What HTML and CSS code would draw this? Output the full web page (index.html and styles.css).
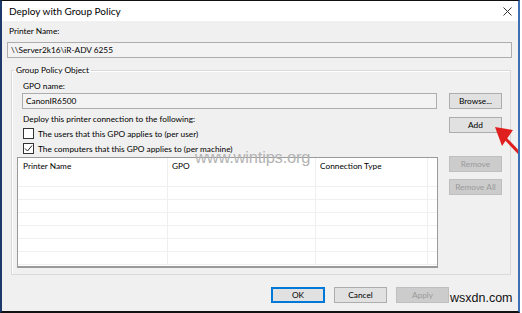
FILE: index.html
```html
<!DOCTYPE html>
<html lang="en">
<head>
  <meta charset="UTF-8" />
  <title>Deploy with Group Policy</title>
  <link rel="stylesheet" href="styles.css">
</head>
<body>

  <div class="window">
    <div class="titlebar">
      <span class="title">Deploy with Group Policy</span>
      <svg class="close" width="9" height="9" viewBox="0 0 9 9">
        <path d="M0.5 0.5 L8.5 8.5 M8.5 0.5 L0.5 8.5" stroke="#333" stroke-width="1" fill="none"/>
      </svg>
    </div>

    <div class="dialog">
      <div class="label">Printer Name:</div>
      <div class="textbox readonly">\\Server2k16\iR-ADV 6255</div>

      <fieldset class="group">
        <legend>Group Policy Object</legend>
        <div class="label indent">GPO name:</div>
        <div class="row">
          <div class="textbox gpo">CanonIR6500</div>
          <button class="btn">Browse...</button>
        </div>

        <div class="row">
          <div class="deploy">
            <div class="label">Deploy this printer connection to the following:</div>
            <div class="check"><span class="box"></span>The users that this GPO applies to (per user)</div>
            <div class="check">
              <span class="box">
                <svg width="9" height="9" viewBox="0 0 9 9"><path d="M1 4.5 L3.5 7 L8 1.5" stroke="#222" stroke-width="1" fill="none"/></svg>
              </span>The computers that this GPO applies to (per machine)
            </div>
          </div>
          <button class="btn add">Add</button>
        </div>

        <div class="row">
          <div class="list">
            <div class="list-row head">
              <span>Printer Name</span><span>GPO</span><span>Connection Type</span><span></span>
            </div>
            <div class="list-row"><span></span><span></span><span></span><span></span></div>
            <div class="list-row"><span></span><span></span><span></span><span></span></div>
            <div class="list-row"><span></span><span></span><span></span><span></span></div>
            <div class="list-row"><span></span><span></span><span></span><span></span></div>
            <div class="list-row"><span></span><span></span><span></span><span></span></div>
            <div class="list-row"><span></span><span></span><span></span><span></span></div>
            <div class="list-row"><span></span><span></span><span></span><span></span></div>
          </div>
          <div class="side">
            <button class="btn" disabled>Remove</button>
            <button class="btn" disabled>Remove All</button>
          </div>
        </div>
      </fieldset>

      <div class="footer">
        <button class="btn default">OK</button>
        <button class="btn">Cancel</button>
        <button class="btn" disabled>Apply</button>
      </div>
    </div>

    <!-- overlays on the screenshot -->
    <div class="watermark">www.wintips.org</div>
    <div class="site">wsxdn.com</div>
    <svg class="arrow" width="44" height="50" viewBox="0 0 44 50">
      <path d="M24 22 L44 43" stroke="#e0201e" stroke-width="3" fill="none"/>
      <polygon points="15,12 33,15 22,31" fill="#e0201e"/>
    </svg>
  </div>

</body>
</html>
```

FILE: styles.css
```css
html, body {
  margin: 0;
  padding: 0;
  background: #ffffff;
  font-family: 'Lato', 'Noto Sans', sans-serif;
  font-size: 8.3px;
  color: #000;
}

.window {
  position: relative;
  width: 520px;
  height: 313px;
  box-sizing: border-box;
  border-top: 1px solid #111;
  border-left: 2px solid #1b3a6b;
  border-right: 2px solid #3d6fb4;
  border-bottom: 2px solid #111;
  background: #f0f0f0;
  display: flex;
  flex-direction: column;
  overflow: hidden;
}

.titlebar {
  height: 20px;
  background: #fff;
  display: flex;
  align-items: center;
  justify-content: space-between;
  padding: 0 6px 0 7px;
}

.title {
  font-size: 10px;
}

.close {
  margin-top: 1px;
}

.dialog {
  flex: 1;
  padding: 4px 6px 0 5px;
}

.label {
  line-height: 12px;
  height: 12px;
  padding-left: 2px;
}

.indent {
  padding-left: 6px;
}

.textbox {
  height: 16px;
  box-sizing: border-box;
  border: 1px solid #adadad;
  line-height: 14px;
  padding-left: 3px;
  background: #f3f3f3;
}

.readonly {
  margin-top: 5px;
}

.group {
  margin: 6px 1px 0 4px;
  padding: 4px 8px 6px 5px;
  border: 1px solid #d9d9d9;
  box-shadow: inset 1px 1px 0 #fff;
}

.group legend {
  padding: 0 2px;
  margin-left: -3px;
  line-height: 12px;
}

.row {
  display: flex;
  align-items: flex-start;
}

.gpo {
  flex: 1;
  margin: 1px 12px 0 5px;
}

.btn {
  width: 53px;
  height: 16px;
  box-sizing: border-box;
  border: 1px solid #adadad;
  background: #e1e1e1;
  font-family: inherit;
  font-size: 8.3px;
  padding: 0;
  color: #000;
}

.btn[disabled] {
  background: #cccccc;
  border-color: #bfbfbf;
  color: #9a9a9a;
}

.row .btn {
  margin-top: 1px;
}

.deploy {
  flex: 1;
  margin-top: 3px;
  padding-left: 4px;
}

.deploy .label {
  height: 14px;
  line-height: 14px;
}

.add {
  margin-top: 8px !important;
}

.check {
  display: flex;
  align-items: center;
  height: 15px;
  padding-left: 2px;
}

.check:first-of-type {
  margin-top: 3px;
}

.box {
  width: 11px;
  height: 11px;
  box-sizing: border-box;
  border: 1px solid #333;
  background: #fff;
  margin-right: 4px;
  display: flex;
  align-items: center;
  justify-content: center;
}

.list {
  width: 421px;
  height: 111px;
  box-sizing: border-box;
  margin: 1px 11px 0 0;
  border: 1px solid #9a9a9a;
  border-bottom-width: 2px;
  background: #fff;
  overflow: hidden;
}

.list-row {
  display: grid;
  grid-template-columns: 150px 148px 112px 1fr;
  height: 13px;
  box-sizing: border-box;
  border-bottom: 1px solid #f0f0f0;
}

.list-row span {
  border-right: 1px solid #efefef;
  padding-left: 4px;
}

.list-row span:last-child {
  border-right: none;
}

.list-row.head {
  height: 16px;
  border-bottom: none;
  line-height: 16px;
}

.list-row.head span:first-child {
  padding-left: 5px;
}

.side {
  display: flex;
  flex-direction: column;
  gap: 7px;
}

.side .btn {
  margin-top: 0;
}

.footer {
  display: flex;
  justify-content: flex-end;
  gap: 9px;
  margin-top: 12px;
  padding-right: 63px;
}

.default {
  border: 1px solid #0078d7;
  box-shadow: inset 0 0 0 1px #0078d7;
  width: 54px;
}

.watermark {
  position: absolute;
  left: 193px;
  top: 147px;
  font-family: 'Liberation Sans', sans-serif;
  font-size: 16.5px;
  color: #b4b4b4;
  letter-spacing: -0.2px;
}

.site {
  position: absolute;
  left: 448px;
  top: 290px;
  font-family: 'Liberation Sans', sans-serif;
  font-size: 12.5px;
  color: #111;
}

.arrow {
  position: absolute;
  left: 478px;
  top: 114px;
}
```
